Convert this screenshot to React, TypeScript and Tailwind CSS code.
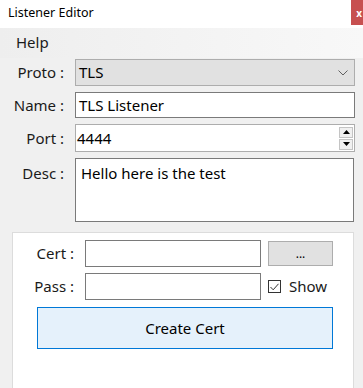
import { useState } from 'react'

const FONT = "font-['Noto_Sans','Open_Sans',sans-serif]"

function Label({ text, top }: { text: string; top?: boolean }) {
  return (
    <div className={`w-[64px] shrink-0 text-right text-[15px] text-[#1a1a1a] ${top ? 'pt-[4px]' : 'self-center'}`}>
      {text}
    </div>
  )
}

export default function App() {
  const [show, setShow] = useState(true)

  return (
    <div className={`w-[363px] h-[388px] bg-[#f0f0f0] overflow-hidden ${FONT}`}>
      {/* Title bar */}
      <div className="h-[28px] bg-white flex items-start justify-between">
        <span className="pl-[8px] pt-[5px] text-[12.5px] leading-[16px] text-black">Listener Editor</span>
        <div className="w-[12px] h-[25px] bg-[#c75050] flex items-center justify-end pr-[1px] text-[10px] font-bold text-white leading-none">
          x
        </div>
      </div>

      {/* Menu */}
      <div className="h-[30px] flex items-center pl-[16px] bg-gradient-to-r from-[#eeeeee] to-[#f8f8f8]">
        <span className="text-[15px] text-[#1a1a1a] -mt-[2px]">Help</span>
      </div>

      <div className="flex flex-col">
        {/* Proto */}
        <div className="flex mt-[1px] h-[27px]">
          <Label text="Proto :" />
          <div className="ml-[11px] w-[280px] h-full bg-[#e1e1e1] border border-[#adadad] flex items-center justify-between pl-[3px] pr-[6px]">
            <span className="text-[15px] text-black">TLS</span>
            <svg width="10" height="6" viewBox="0 0 10 6" fill="none" stroke="#606060" strokeWidth="1">
              <polyline points="0.5,0.5 5,5 9.5,0.5" />
            </svg>
          </div>
        </div>

        {/* Name */}
        <div className="flex mt-[6px] h-[26px]">
          <Label text="Name :" />
          <div className="ml-[11px] w-[280px] h-full bg-white border border-[#7a7a7a] flex items-center pl-[3px]">
            <span className="text-[15px] text-black">TLS Listener</span>
          </div>
        </div>

        {/* Port */}
        <div className="flex mt-[6px] h-[28px]">
          <Label text="Port :" />
          <div className="ml-[11px] w-[280px] h-full bg-white border border-[#adadad] flex items-center justify-between pl-[1px] pr-[1px]">
            <span className="text-[15px] text-black">4444</span>
            <div className="flex flex-col gap-[1px] w-[14px]">
              <div className="h-[11px] bg-[#f0f0f0] border border-[#c4c4c4] flex items-center justify-center">
                <svg width="7" height="4" viewBox="0 0 7 4"><polygon points="0,4 7,4 3.5,0" fill="#000" /></svg>
              </div>
              <div className="h-[11px] bg-[#f0f0f0] border border-[#c4c4c4] flex items-center justify-center">
                <svg width="7" height="4" viewBox="0 0 7 4"><polygon points="0,0 7,0 3.5,4" fill="#000" /></svg>
              </div>
            </div>
          </div>
        </div>

        {/* Desc */}
        <div className="flex mt-[6px] h-[64px]">
          <Label text="Desc :" top />
          <div className="ml-[11px] w-[279px] h-full bg-white border border-[#7a7a7a] pl-[5px] pt-[2px]">
            <span className="text-[15px] text-black">Hello here is the test</span>
          </div>
        </div>

        {/* Cert panel */}
        <div className="ml-[12px] mt-[10px] w-[342px] h-[200px] bg-white border border-[#dcdcdc] pt-[7px]">
          <div className="flex h-[27px]">
            <div className="w-[61px] shrink-0 text-right text-[15px] text-[#1a1a1a] self-center">Cert :</div>
            <div className="ml-[11px] w-[176px] h-full bg-white border border-[#7a7a7a]" />
            <button className="ml-[7px] w-[65px] h-[25px] mt-[1px] bg-[#e1e1e1] border border-[#adadad] flex items-center justify-center text-[12px] text-black leading-none">
              ...
            </button>
          </div>

          <div className="flex h-[27px] mt-[6px]">
            <div className="w-[61px] shrink-0 text-right text-[15px] text-[#1a1a1a] self-center">Pass :</div>
            <div className="ml-[11px] w-[176px] h-full bg-white border border-[#7a7a7a]" />
            <label className="ml-[7px] flex items-center gap-[8px] cursor-default" onClick={() => setShow(!show)}>
              <span className="w-[13px] h-[13px] border border-[#333] bg-white flex items-center justify-center">
                {show && (
                  <svg width="9" height="8" viewBox="0 0 9 8" fill="none" stroke="#333" strokeWidth="1">
                    <polyline points="0.5,4 3.2,6.8 8.5,0.8" />
                  </svg>
                )}
              </span>
              <span className="text-[15px] text-[#1a1a1a]">Show</span>
            </label>
          </div>

          <button className="ml-[24px] mt-[7px] w-[296px] h-[42px] bg-[#e5f1fb] border border-[#0078d7] text-[15px] text-black flex items-center justify-center">
            Create Cert
          </button>
        </div>
      </div>
    </div>
  )
}
